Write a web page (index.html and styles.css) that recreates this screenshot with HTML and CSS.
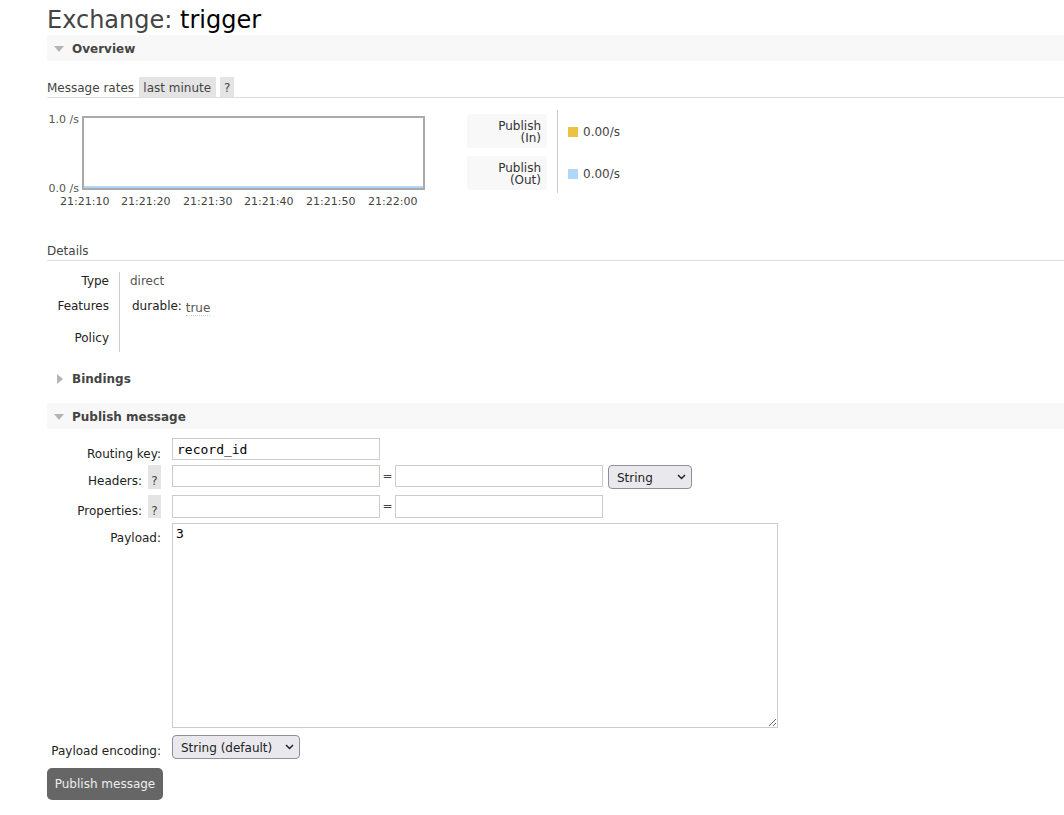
FILE: index.html
```html
<!DOCTYPE html>
<html>
<head>
<meta charset="utf-8">
<title>Exchange: trigger</title>
<link rel="stylesheet" href="styles.css">
</head>
<body>
<div class="main">
  <h1><span class="h1-kind">Exchange:</span> <b class="h1-name">trigger</b></h1>

  <div class="sec sec-open"><span class="tri-down"></span>Overview</div>
  <div class="overview">
    <div class="subhead">Message rates <span class="chip">last minute</span> <span class="chip chip-q">?</span></div>
    <div class="rates">
      <div class="chart">
        <span class="ylab ylab-top">1.0 /s</span>
        <span class="ylab ylab-bot">0.0 /s</span>
        <div class="plot"><div class="plot-line"></div></div>
        <span class="xlab" style="left:13px">21:21:10</span>
        <span class="xlab" style="left:74px">21:21:20</span>
        <span class="xlab" style="left:136px">21:21:30</span>
        <span class="xlab" style="left:197px">21:21:40</span>
        <span class="xlab" style="left:259px">21:21:50</span>
        <span class="xlab" style="left:321px">21:22:00</span>
      </div>
      <div class="legend">
        <div class="legend-keys">
          <div class="lkey">Publish<br>(In)</div>
          <div class="lkey">Publish<br>(Out)</div>
        </div>
        <div class="legend-vals">
          <div class="lval"><span class="sw sw-y"></span>0.00/s</div>
          <div class="lval"><span class="sw sw-b"></span>0.00/s</div>
        </div>
      </div>
    </div>

    <div class="subhead subhead-details">Details</div>
    <div class="details">
      <div class="drow drow-1"><div class="dth">Type</div><div class="dtd">direct</div></div>
      <div class="drow drow-2"><div class="dth">Features</div><div class="dtd dtd-feat"><span class="fkey">durable:</span> <abbr class="fval">true</abbr></div></div>
      <div class="drow drow-3"><div class="dth">Policy</div><div class="dtd"></div></div>
    </div>
  </div>

  <div class="sec sec-closed"><span class="tri-right"></span>Bindings</div>

  <div class="sec sec-open sec-publish"><span class="tri-down"></span>Publish message</div>
  <form class="pform">
    <div class="frow frow-1">
      <div class="flabel"><span class="ltxt">Routing key:</span></div>
      <input class="inp" type="text" value="record_id">
    </div>
    <div class="frow frow-2">
      <div class="flabel"><span class="ltxt">Headers:</span><span class="help">?</span></div>
      <input class="inp" type="text">
      <span class="eq">=</span>
      <input class="inp" type="text">
      <div class="sel-wrap sel-type">
        <select class="sel"><option>String</option></select>
        <svg class="chev" width="9" height="6" viewBox="0 0 9 6"><path d="M1 1 L4.5 4.5 L8 1" fill="none" stroke="#222" stroke-width="1.5"/></svg>
      </div>
    </div>
    <div class="frow frow-3">
      <div class="flabel"><span class="ltxt">Properties:</span><span class="help">?</span></div>
      <input class="inp" type="text">
      <span class="eq">=</span>
      <input class="inp" type="text">
    </div>
    <div class="frow frow-4">
      <div class="flabel"><span class="ltxt ltxt-pl">Payload:</span></div>
      <textarea class="payload">3</textarea>
    </div>
    <div class="frow frow-5">
      <div class="flabel"><span class="ltxt">Payload encoding:</span></div>
      <div class="sel-wrap sel-enc">
        <select class="sel"><option>String (default)</option></select>
        <svg class="chev" width="9" height="6" viewBox="0 0 9 6"><path d="M1 1 L4.5 4.5 L8 1" fill="none" stroke="#222" stroke-width="1.5"/></svg>
      </div>
    </div>
    <button type="button" class="btn">Publish message</button>
  </form>
</div>
</body>
</html>
```

FILE: styles.css
```css
html, body {
  margin: 0;
  padding: 0;
  background: #fff;
}
body {
  font-family: "DejaVu Sans", Verdana, sans-serif;
  font-size: 12px;
  color: #444;
}
.main {
  padding-left: 47px;
}
h1 {
  margin: 0;
  padding-top: 5px;
  height: 30px;
  line-height: 31px;
  font-size: 24px;
  font-weight: normal;
  color: #444;
}
.h1-name {
  font-weight: normal;
  color: #000;
}

/* section headers */
.sec {
  height: 26px;
  box-sizing: border-box;
  padding-top: 1px;
  display: flex;
  align-items: center;
  padding-left: 7px;
  font-weight: bold;
  color: #444;
}
.sec-open {
  background: #f8f8f8;
}
.tri-down {
  width: 0;
  height: 0;
  border-left: 5px solid transparent;
  border-right: 5px solid transparent;
  border-top: 6px solid #b4b4b4;
  margin-right: 8px;
}
.tri-right {
  width: 0;
  height: 0;
  border-top: 5.5px solid transparent;
  border-bottom: 5.5px solid transparent;
  border-left: 6px solid #b4b4b4;
  margin-left: 3px;
  margin-right: 9px;
}
.sec-closed {
  margin-top: 13px;
}
.sec-publish {
  margin-top: 12px;
}

/* overview */
.overview {
  padding-top: 16px;
}
.subhead {
  box-sizing: border-box;
  height: 21px;
  padding-top: 2px;
  line-height: 18px;
  border-bottom: 1px solid #ddd;
  color: #444;
}
.chip {
  display: inline-block;
  box-sizing: border-box;
  height: 20px;
  background: #e4e4e4;
  padding: 2px 4.5px 0;
  margin-left: 1px;
  margin-top: -2px;
  line-height: 18px;
  vertical-align: top;
  color: #444;
}
.chip-q {
  padding: 2px 3.5px 0;
}
.rates {
  display: flex;
  align-items: flex-start;
  margin-top: 12px;
}
.chart {
  position: relative;
  width: 390px;
  height: 100px;
  margin-right: 30px;
  flex: none;
  font-size: 11px;
}
.ylab {
  position: absolute;
  right: 358px;
  line-height: 13px;
  color: #555;
  white-space: nowrap;
}
.ylab-top { top: 3px; }
.ylab-bot { top: 72px; }
.plot {
  position: absolute;
  left: 35px;
  top: 6px;
  width: 343px;
  height: 74px;
  box-sizing: border-box;
  border: 2px solid #aaa;
}
.plot-line {
  position: absolute;
  left: 0;
  right: 0;
  bottom: 0;
  height: 2px;
  background: #afd8f8;
}
.xlab {
  position: absolute;
  top: 85px;
  line-height: 13px;
  color: #444;
  white-space: nowrap;
}
.legend {
  display: flex;
}
.legend-keys {
  display: flex;
  flex-direction: column;
  gap: 8px;
  padding-top: 4px;
  padding-right: 10px;
}
.lkey {
  width: 80px;
  height: 34px;
  box-sizing: border-box;
  padding: 6px 6px 4px 0;
  line-height: 12px;
  text-align: right;
  background: #f8f8f8;
  border-radius: 3px;
  color: #333;
}
.legend-vals {
  border-left: 1px solid #ccc;
  padding: 4px 0 3px 10px;
  display: flex;
  flex-direction: column;
  gap: 8px;
}
.lval {
  height: 34px;
  display: flex;
  align-items: center;
  padding-top: 1px;
  box-sizing: border-box;
  color: #444;
}
.sw {
  width: 10px;
  height: 10px;
  margin-right: 5px;
}
.sw-y { background: #edc240; }
.sw-b { background: #afd8f8; }

/* details */
.subhead-details {
  margin-top: 30px;
}
.details {
  margin-top: 11px;
  display: flex;
  flex-direction: column;
}
.drow {
  display: flex;
}
.dth {
  width: 62px;
  padding-right: 10px;
  text-align: right;
  border-right: 1px solid #ccc;
  color: #222;
  box-sizing: content-box;
}
.dtd {
  padding-left: 10px;
  color: #555;
}
.drow-1 .dth, .drow-1 .dtd {
  padding-top: 1px;
  line-height: 17px;
  height: 20px;
}
.drow-2 .dth, .drow-2 .dtd {
  padding-top: 1px;
  line-height: 24px;
  height: 24px;
}
.drow-3 .dth, .drow-3 .dtd {
  padding-top: 13px;
  line-height: 14px;
  height: 21px;
}
.dtd-feat {
  padding-left: 12px;
}
.fkey {
  color: #222;
}
.fval {
  text-decoration: none;
  border-bottom: 1px dotted #ccc;
  color: #555;
  position: relative;
  top: 2px;
  line-height: 14px;
  display: inline-block;
}

/* publish form */
.pform {
  margin: 0;
  padding-top: 9px;
}
.frow {
  display: flex;
  align-items: flex-start;
}
.frow-1 { height: 22px; margin-bottom: 5px; }
.frow-2 { height: 24px; margin-bottom: 6px; }
.frow-3 { height: 23px; margin-bottom: 5px; }
.frow-4 { height: 205px; margin-bottom: 7px; }
.frow-5 { height: 24px; }
.flabel {
  width: 114px;
  flex: none;
  margin-right: 11px;
  display: flex;
  justify-content: flex-end;
  align-items: flex-start;
  gap: 6px;
  color: #222;
  white-space: nowrap;
}
.ltxt {
  padding-top: 8px;
  line-height: 16px;
}
.ltxt-pl {
  padding-top: 7px;
}
.help {
  width: 13px;
  height: 24px;
  box-sizing: border-box;
  padding-top: 8px;
  line-height: 16px;
  text-align: center;
  background: #e4e4e4;
  color: #444;
}
.frow-3 .help {
  height: 23px;
}
.inp {
  width: 208px;
  height: 22px;
  box-sizing: border-box;
  margin: 0;
  border: 1px solid #ccc;
  padding: 0 4px;
  font-family: "DejaVu Sans Mono", monospace;
  font-size: 13px;
  color: #000;
  background: #fff;
  outline: none;
}
.frow-3 .inp {
  height: 23px;
}
.eq {
  width: 15px;
  text-align: center;
  line-height: 23px;
  color: #444;
}
.sel-wrap {
  position: relative;
  margin-left: 5px;
}
.sel-enc {
  margin-left: 0;
}
.sel {
  appearance: none;
  -webkit-appearance: none;
  margin: 0;
  height: 24px;
  box-sizing: border-box;
  border: 1px solid #8f8f9d;
  border-radius: 4px;
  background: #e9e9ed;
  padding: 2px 0 0 8px;
  font-family: "DejaVu Sans", Verdana, sans-serif;
  font-size: 12px;
  color: #222;
  display: block;
}
.sel-type .sel { width: 84px; }
.sel-enc .sel { width: 128px; }
.chev {
  position: absolute;
  right: 6px;
  top: 9px;
  pointer-events: none;
}
.payload {
  width: 606px;
  height: 205px;
  box-sizing: border-box;
  margin: 0;
  border: 1px solid #ccc;
  padding: 2px 3px;
  font-family: "DejaVu Sans Mono", monospace;
  font-size: 13px;
  color: #000;
  outline: none;
}
.btn {
  margin-top: 9px;
  height: 32px;
  width: 116px;
  padding: 0;
  border: none;
  border-radius: 5px;
  background: #666;
  color: #eee;
  font-family: "DejaVu Sans", Verdana, sans-serif;
  font-size: 12px;
}
```
